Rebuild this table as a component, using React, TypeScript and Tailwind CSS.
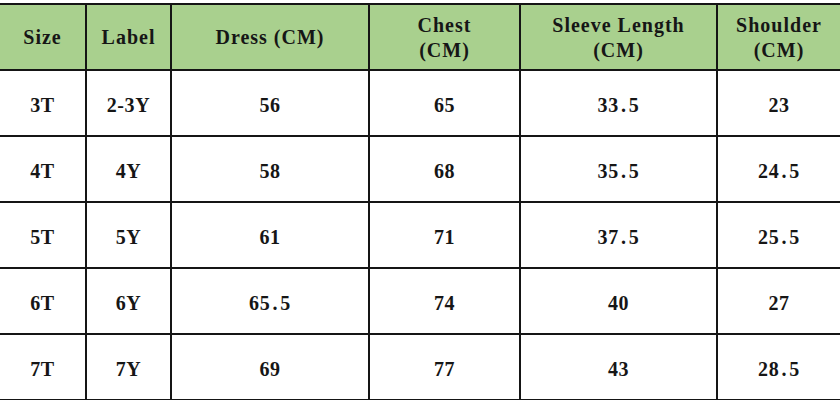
const header = [
  ["Size"],
  ["Label"],
  ["Dress (CM)"],
  ["Chest", "(CM)"],
  ["Sleeve Length", "(CM)"],
  ["Shoulder", "(CM)"],
];

const rows = [
  ["3T", "2-3Y", "56", "65", "33.5", "23"],
  ["4T", "4Y", "58", "68", "35.5", "24.5"],
  ["5T", "5Y", "61", "71", "37.5", "25.5"],
  ["6T", "6Y", "65.5", "74", "40", "27"],
  ["7T", "7Y", "69", "77", "43", "28.5"],
];

// the decimal point sits in a full digit-wide cell, as in the original chart
function Value({ text }: { text: string }) {
  const [whole, frac] = text.split(".");
  if (frac === undefined) return <span>{text}</span>;
  return (
    <span>
      {whole}
      <span className="inline-block w-[10px] text-center">.</span>
      {frac}
    </span>
  );
}

export default function App() {
  return (
    <div className="w-[840px] h-[400px] bg-white overflow-hidden pt-[3px]">
      <div
        className="grid grid-cols-[85px_83px_196px_149px_195px_122px] auto-rows-[64px] gap-[2px] bg-[#151515] pt-[2px] pb-[1px] text-[20px] font-bold text-[#161616]"
        style={{ fontFamily: '"Liberation Serif", "DejaVu Serif", serif' }}
      >
        {header.map((lines, i) => (
          <div
            key={i}
            className="bg-[#a9d08e] flex flex-col items-center justify-center leading-[25px] tracking-[1px] pt-[1px]"
          >
            {lines.map((l) => (
              <span key={l} className="whitespace-pre">
                {l}
              </span>
            ))}
          </div>
        ))}
        {rows.map((row, r) =>
          row.map((cell, c) => (
            <div
              key={`${r}-${c}`}
              className="bg-white flex items-center justify-center tracking-[0.6px] pt-[3px]"
            >
              <Value text={cell} />
            </div>
          ))
        )}
      </div>
    </div>
  );
}
